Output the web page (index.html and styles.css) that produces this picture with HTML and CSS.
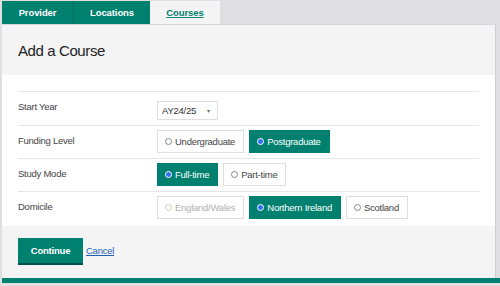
FILE: index.html
```
<!DOCTYPE html>
<html lang="en">
<head>
    <meta charset="UTF-8">
    <meta name="viewport" content="width=device-width, initial-scale=1.0">
    <title>Add a Course</title>
    <link rel="stylesheet" href="styles.css">
</head>
<body>
    <div class="page">
        <!-- Tabs -->
        <nav class="tabs">
            <a class="tab tab-provider" href="#">Provider</a>
            <a class="tab tab-locations" href="#">Locations</a>
            <a class="tab tab-active" href="#">Courses</a>
        </nav>

        <div class="panel">
            <div class="panel-head">
                <h1>Add a Course</h1>
            </div>

            <div class="form">
                <div class="row">
                    <div class="label">Start Year</div>
                    <div class="controls">
                        <div class="select">AY24/25 <span class="caret">&#9662;</span></div>
                    </div>
                </div>
                <div class="row">
                    <div class="label">Funding Level</div>
                    <div class="controls">
                        <span class="opt"><i class="dot"></i>Undergraduate</span>
                        <span class="opt selected"><i class="dot"></i>Postgraduate</span>
                    </div>
                </div>
                <div class="row">
                    <div class="label">Study Mode</div>
                    <div class="controls">
                        <span class="opt selected"><i class="dot"></i>Full-time</span>
                        <span class="opt"><i class="dot"></i>Part-time</span>
                    </div>
                </div>
                <div class="row">
                    <div class="label">Domicile</div>
                    <div class="controls">
                        <span class="opt disabled"><i class="dot"></i>England/Wales</span>
                        <span class="opt selected"><i class="dot"></i>Northern Ireland</span>
                        <span class="opt"><i class="dot"></i>Scotland</span>
                    </div>
                </div>
            </div>

            <div class="panel-foot">
                <button class="btn-continue">Continue</button>
                <a class="cancel" href="#">Cancel</a>
            </div>
        </div>
        <div class="bottom-bar"></div>
    </div>
</body>
</html>
```

FILE: styles.css
```
* {
    margin: 0;
    padding: 0;
    box-sizing: border-box;
}

body {
    font-family: 'Liberation Sans', Arial, sans-serif;
    background: #dfdfe1;
    color: #444;
    font-size: 9.5px;
    letter-spacing: -0.25px;
}

.page {
    padding: 1px 4px 0 2px;
}

/* Tabs */
.tabs {
    display: flex;
    height: 23px;
}

.tab {
    display: flex;
    align-items: center;
    justify-content: center;
    background: #00806f;
    color: #fff;
    font-weight: bold;
    font-size: 9.5px;
    letter-spacing: -0.1px;
    text-decoration: none;
}

.tab-provider {
    width: 72px;
    border-right: 1px solid #00705f;
}

.tab-locations {
    width: 76px;
}

.tab-active {
    width: 70px;
    background: #f4f4f4;
    color: #00806f;
    text-decoration: underline;
}

/* Panel */
.panel {
    background: #f4f4f4;
    border-right: 1px solid #cfcfd3;
}

.panel-head {
    height: 51px;
    display: flex;
    align-items: center;
    padding-left: 16px;
    border-top: 1px solid #d8d8dc;
}

.panel-head h1 {
    font-size: 15px;
    font-weight: normal;
    letter-spacing: -0.4px;
    color: #222;
}

.form {
    background: #fff;
    padding: 16px 16px 2px 16px;
}

.row {
    display: flex;
    border-top: 1px solid #e6e6e6;
    padding: 4px 0 5px;
}

.label {
    width: 139px;
    padding-top: 5px;
}

.controls {
    display: flex;
    gap: 5px;
}

.select {
    margin-top: 5px;
    width: 61px;
    height: 19px;
    border: 1px solid #dedede;
    display: flex;
    align-items: center;
    justify-content: space-between;
    padding: 0 7px 0 4px;
    color: #333;
}

.caret {
    font-size: 6px;
    color: #666;
}

.opt {
    display: inline-flex;
    align-items: center;
    gap: 3px;
    height: 23px;
    padding: 0 8px 0 7px;
    border: 1px solid #dedede;
    background: #fff;
    color: #444;
}

.dot {
    width: 7px;
    height: 7px;
    border: 1px solid #888;
    border-radius: 50%;
}

.opt.selected {
    background: #00806f;
    border-color: #00806f;
    color: #fff;
}

.opt.selected .dot {
    background: #2f6ef0;
    border: 1.5px solid #fff;
}

.opt.disabled {
    color: #b0b0b0;
}

.opt.disabled .dot {
    border-color: #ccc;
}

/* Footer */
.panel-foot {
    display: flex;
    align-items: center;
    gap: 3px;
    padding: 12px 16px 15px;
}

.btn-continue {
    width: 65px;
    height: 25px;
    background: #00806f;
    color: #fff;
    border: none;
    font-family: inherit;
    font-size: 9.5px;
    font-weight: bold;
    letter-spacing: -0.2px;
    box-shadow: 0 2px 0 #00524a;
    cursor: pointer;
}

.cancel {
    color: #1d5fb5;
}

.bottom-bar {
    height: 5px;
    background: #00806f;
    margin-right: -4px;
}
```
